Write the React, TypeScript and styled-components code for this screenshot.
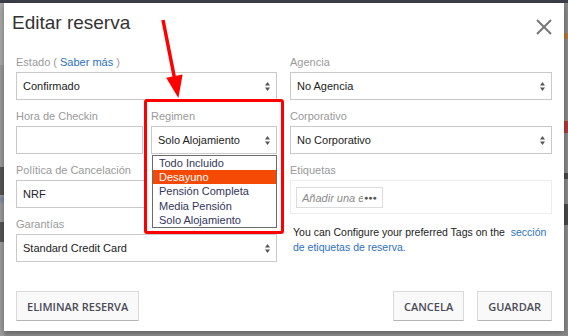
import React from "react";
import styled, { createGlobalStyle } from "styled-components";

const GlobalStyle = createGlobalStyle`
  html, body { margin: 0; padding: 0; }
  body {
    width: 568px;
    height: 336px;
    overflow: hidden;
    background: #8c8c8c;
    font-family: "Liberation Sans", Arial, sans-serif;
  }
  * { box-sizing: border-box; }
`;

const Page = styled.div`
  position: relative;
  width: 568px;
  height: 336px;
  display: flex;
  flex-direction: column;
  background: #8e8e8e;
  overflow: hidden;
`;

const TopBar = styled.div`
  height: 3px;
  flex: none;
  background: #3c3f4b;
`;

const Stage = styled.div`
  flex: 1;
  display: flex;
  align-items: flex-start;
`;

const LeftStrip = styled.div`
  width: 4px;
  align-self: stretch;
  background: linear-gradient(
    to bottom,
    #a9a9a9 0px,
    #a9a9a9 62px,
    #9a9a9a 62px,
    #9a9a9a 164px,
    #555 164px,
    #555 192px,
    #9a9a9a 192px,
    #7b88a8 196px,
    #9a9a9a 202px,
    #9a9a9a 219px,
    #555 219px,
    #555 239px,
    #9c9c9c 239px
  );
`;

const RightStrip = styled.div`
  width: 4px;
  align-self: stretch;
  background: linear-gradient(
    to bottom,
    #8a8a8a 0px,
    #8a8a8a 30px,
    #b07a3a 30px,
    #b07a3a 36px,
    #8a8a8a 36px,
    #8a8a8a 118px,
    #b33a3a 118px,
    #b33a3a 130px,
    #8a8a8a 130px,
    #8a8a8a 170px,
    #4a4a4a 170px,
    #4a4a4a 176px,
    #8a8a8a 176px,
    #8a8a8a 201px,
    #4a4a4a 201px,
    #4a4a4a 222px,
    #8a8a8a 222px
  );
`;

const Modal = styled.div`
  width: 560px;
  height: 328px;
  background: #fff;
  box-shadow: 0 2px 6px rgba(0, 0, 0, 0.35);
  display: flex;
  flex-direction: column;
  padding: 0 12px 10px 12px;
  position: relative;
`;

const Header = styled.div`
  height: 52px;
  display: flex;
  align-items: flex-start;
  justify-content: space-between;
  padding-top: 8px;
`;

const Title = styled.h1`
  margin: 0 0 0 -4px;
  font-family: "Liberation Sans", Arial, sans-serif;
  font-weight: normal;
  font-size: 19px;
  line-height: 24px;
  color: #333;
`;

const CloseButton = styled.button`
  border: none;
  background: none;
  padding: 0;
  margin: 8px 0 0 0;
  width: 16px;
  height: 16px;
  display: flex;
  align-items: center;
  justify-content: center;
  cursor: pointer;
`;

const Body = styled.div`
  display: grid;
  grid-template-columns: 261px 262px;
  column-gap: 13px;
  align-items: start;
`;

const Column = styled.div`
  display: flex;
  flex-direction: column;
  gap: 9px;
`;

const Pair = styled.div`
  display: grid;
  grid-template-columns: 127px 126px;
  column-gap: 8px;
`;

const Field = styled.div<{ $raised?: boolean }>`
  display: flex;
  flex-direction: column;
  position: relative;
  z-index: ${(p) => (p.$raised ? 3 : "auto")};
`;

const Label = styled.label`
  position: relative;
  z-index: 2;
  font-size: 11px;
  line-height: 15px;
  height: 15px;
  margin-bottom: 2px;
  color: #9a9a9a;
  white-space: nowrap;
`;

const Link = styled.a`
  color: #2d6fc4;
  text-decoration: none;
`;

const SelectBox = styled.div`
  position: relative;
  z-index: 2;
  height: 28px;
  border: 1px solid #c9c9c9;
  background: #fff;
  display: flex;
  align-items: center;
  justify-content: space-between;
  padding: 0 6px 0 6px;
  font-size: 11px;
  color: #222;
  white-space: nowrap;
`;

const TextInput = styled.div`
  height: 28px;
  border: 1px solid #c9c9c9;
  background: #fff;
`;

const Highlight = styled.div`
  position: absolute;
  z-index: 1;
  left: -7px;
  right: -7px;
  top: -10px;
  height: 135px;
  border: 3px solid #ff0000;
  border-radius: 3px;
  background: #fff;
`;

const Dropdown = styled.ul`
  position: absolute;
  z-index: 4;
  top: 46px;
  left: 1px;
  right: 0;
  margin: 0;
  padding: 0;
  list-style: none;
  background: #fff;
  border: 1px solid #6b6b6b;
  height: 73px;
`;

const Option = styled.li<{ $active?: boolean }>`
  height: 14.2px;
  line-height: 14.2px;
  padding-left: 6px;
  font-size: 11px;
  white-space: nowrap;
  color: ${(p) => (p.$active ? "#fff" : "#33365a")};
  background: ${(p) => (p.$active ? "#f44a05" : "transparent")};
`;

const TagsBox = styled.div`
  height: 34px;
  border: 1px solid #ececec;
  padding: 6px 5px;
  display: flex;
  align-items: flex-start;
`;

const TagInput = styled.div`
  width: 87px;
  height: 21px;
  border: 1px solid #dcdcdc;
  display: flex;
  align-items: center;
  padding-left: 5px;
  font-size: 11px;
  font-style: italic;
  color: #8a8a8a;
  overflow: hidden;
`;

const Placeholder = styled.span`
  display: inline-block;
  width: 61px;
  overflow: hidden;
  white-space: nowrap;
`;

const Dots = styled.span`
  display: inline-block;
  font-style: normal;
  font-size: 7px;
  letter-spacing: 0;
  color: #555;
  margin-left: 1px;
  white-space: nowrap;
`;

const HelpText = styled.p`
  margin: 11px 0 0 0;
  padding: 0 2px 0 3px;
  font-size: 10.5px;
  line-height: 15px;
  color: #222;
`;

const Footer = styled.div`
  margin-top: auto;
  display: flex;
  justify-content: space-between;
  align-items: center;
`;

const ButtonGroup = styled.div`
  display: flex;
  gap: 13px;
`;

const Button = styled.button`
  height: 30px;
  padding: 0 10px;
  background: #f9f9f9;
  border: 1px solid #dadada;
  border-bottom-color: #b5b5b5;
  border-radius: 1px;
  font-family: "Open Sans", "Liberation Sans", sans-serif;
  font-weight: 600;
  font-size: 11px;
  color: #4b4b58;
  cursor: pointer;
`;

const ArrowLayer = styled.svg`
  position: absolute;
  left: 0;
  top: 0;
  pointer-events: none;
  z-index: 10;
`;

const SortIcon = () => (
  <svg width="5" height="9" viewBox="0 0 5 9" aria-hidden>
    <path d="M2.5 0 L5 3.5 L0 3.5 Z" fill="#555" />
    <path d="M2.5 9 L5 5.5 L0 5.5 Z" fill="#555" />
  </svg>
);

const Select = ({ value }: { value: string }) => (
  <SelectBox>
    <span>{value}</span>
    <SortIcon />
  </SelectBox>
);

const regimenOptions = [
  "Todo Incluido",
  "Desayuno",
  "Pensión Completa",
  "Media Pensión",
  "Solo Alojamiento",
];

export default function App() {
  return (
    <>
      <GlobalStyle />
      <Page>
        <TopBar />
        <Stage>
          <LeftStrip />
          <Modal>
            <Header>
              <Title>Editar reserva</Title>
              <CloseButton aria-label="Cerrar">
                <svg width="16" height="16" viewBox="0 0 16 16">
                  <path d="M1 1 L15 15 M15 1 L1 15" stroke="#777" strokeWidth="2" />
                </svg>
              </CloseButton>
            </Header>
            <Body>
              <Column>
                <Field>
                  <Label>
                    Estado ( <Link href="#">Saber más</Link> )
                  </Label>
                  <Select value="Confirmado" />
                </Field>
                <Pair>
                  <Field>
                    <Label>Hora de Checkin</Label>
                    <TextInput />
                  </Field>
                  <Field $raised>
                    <Highlight />
                    <Label>Regimen</Label>
                    <Select value="Solo Alojamiento" />
                    <Dropdown>
                      {regimenOptions.map((o) => (
                        <Option key={o} $active={o === "Desayuno"}>
                          {o}
                        </Option>
                      ))}
                    </Dropdown>
                  </Field>
                </Pair>
                <Field>
                  <Label>Política de Cancelación</Label>
                  <Select value="NRF" />
                </Field>
                <Field>
                  <Label>Garantías</Label>
                  <Select value="Standard Credit Card" />
                </Field>
              </Column>
              <Column>
                <Field>
                  <Label>Agencia</Label>
                  <Select value="No Agencia" />
                </Field>
                <Field>
                  <Label>Corporativo</Label>
                  <Select value="No Corporativo" />
                </Field>
                <Field>
                  <Label>Etiquetas</Label>
                  <TagsBox>
                    <TagInput>
                      <Placeholder>Añadir una etiqueta</Placeholder>
                      <Dots>●●●</Dots>
                    </TagInput>
                  </TagsBox>
                  <HelpText>
                    You can Configure your preferred Tags on the&nbsp;{" "}
                    <Link href="#">sección de etiquetas de reserva.</Link>
                  </HelpText>
                </Field>
              </Column>
            </Body>
            <Footer>
              <Button>ELIMINAR RESERVA</Button>
              <ButtonGroup>
                <Button>CANCELA</Button>
                <Button>GUARDAR</Button>
              </ButtonGroup>
            </Footer>
          </Modal>
          <RightStrip />
        </Stage>
        <ArrowLayer width="568" height="336" viewBox="0 0 568 336">
          <line x1="163" y1="20" x2="174.5" y2="78" stroke="#ff0000" strokeWidth="3.5" />
          <polygon points="166.2,77.8 182.6,74.4 178.4,98" fill="#ff0000" />
        </ArrowLayer>
      </Page>
    </>
  );
}
